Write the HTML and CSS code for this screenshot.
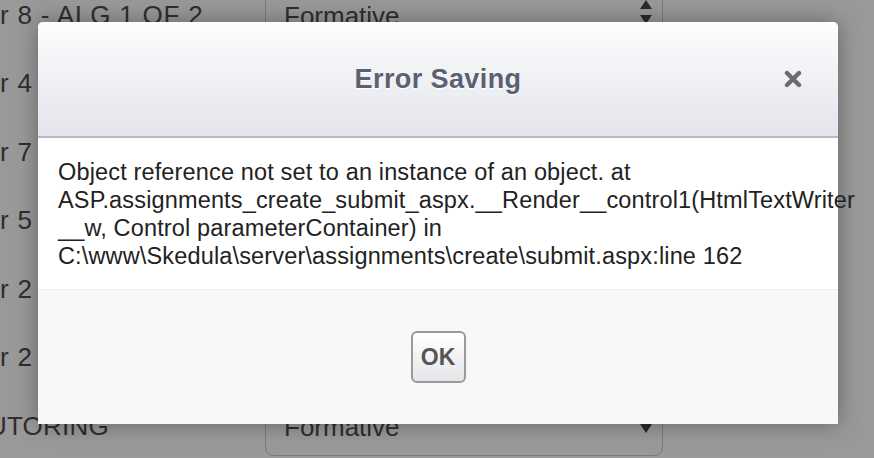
FILE: index.html
```html
<!DOCTYPE html>
<html lang="en">

<head>
  <meta charset="UTF-8">
  <meta name="viewport" content="width=device-width, initial-scale=1.0">
  <title>Error Saving</title>
  <link rel="stylesheet" href="styles.css">
</head>

<body>
  <!-- Page behind the modal -->
  <div class="page">
    <div class="row">
      <div class="row-label">r 8 - ALG 1 OF 2</div>
      <div class="select select-spin">Formative</div>
    </div>
    <div class="row">
      <div class="row-label">r 4</div>
      <div class="select">Formative</div>
    </div>
    <div class="row">
      <div class="row-label">r 7</div>
      <div class="select">Formative</div>
    </div>
    <div class="row">
      <div class="row-label">r 5</div>
      <div class="select">Formative</div>
    </div>
    <div class="row">
      <div class="row-label">r 2</div>
      <div class="select">Formative</div>
    </div>
    <div class="row">
      <div class="row-label">r 2</div>
      <div class="select">Formative</div>
    </div>
    <div class="row">
      <div class="row-label cut">UTORING</div>
      <div class="select">Formative</div>
    </div>
  </div>

  <!-- Modal -->
  <div class="modal">
    <div class="modal-header">
      <h2 class="modal-title">Error Saving</h2>
      <span class="modal-close">
        <svg width="18" height="18" viewBox="0 0 18 18">
          <path d="M3 3 L15 15 M15 3 L3 15" stroke="#6b6b6b" stroke-width="4.4" stroke-linecap="round" />
        </svg>
      </span>
    </div>
    <div class="modal-body">
      Object reference not set to an instance of an object. at
      ASP.assignments_create_submit_aspx.__Render__control1(HtmlTextWriter
      __w, Control parameterContainer) in
      C:\www\Skedula\server\assignments\create\submit.aspx:line 162
    </div>
    <div class="modal-footer">
      <button class="btn-ok">OK</button>
    </div>
  </div>
</body>

</html>
```

FILE: styles.css
```css
body {
  margin: 0;
  height: 458px;
  overflow: hidden;
  background: #999999;
  font-family: 'Liberation Sans', Arial, sans-serif;
  position: relative;
}

/* Dimmed page underneath */
.page {
  display: flex;
  flex-direction: column;
  margin-top: -19px;
}

.row {
  height: 68.5px;
  display: flex;
  align-items: center;
}

.row-label {
  width: 265px;
  font-size: 26px;
  letter-spacing: 0.8px;
  color: #2e2e2e;
  white-space: nowrap;
}

.row-label.cut {
  margin-left: -12px;
  width: 277px;
  letter-spacing: 0.2px;
}

.select {
  width: 398px;
  height: 58px;
  box-sizing: border-box;
  border: 1px solid #7a7a7a;
  border-radius: 8px;
  padding-left: 18px;
  font-size: 26px;
  color: #2e2e2e;
  display: flex;
  align-items: center;
  position: relative;
  margin-top: 2px;
}

.select::after {
  content: '';
  position: absolute;
  right: 10px;
  top: 25px;
  border-left: 6px solid transparent;
  border-right: 6px solid transparent;
  border-top: 9px solid #2b2b2b;
}

.select-spin::before {
  content: '';
  position: absolute;
  right: 10px;
  top: 12px;
  border-left: 6px solid transparent;
  border-right: 6px solid transparent;
  border-bottom: 9px solid #2b2b2b;
}

.select-spin::after {
  top: 27px;
}

/* Modal */
.modal {
  position: absolute;
  left: 38px;
  top: 22px;
  width: 800px;
  height: 402px;
  border-radius: 5px 5px 0 0;
  background: #f8f8f8;
  box-shadow: 0 0 22px rgba(0, 0, 0, 0.35);
  display: flex;
  flex-direction: column;
}

.modal-header {
  height: 114px;
  border-radius: 5px 5px 0 0;
  background: linear-gradient(to bottom, #fdfdfd, #e3e5ec);
  border-bottom: 2px solid #b9b9c6;
  display: flex;
  align-items: center;
  justify-content: center;
  position: relative;
}

.modal-title {
  margin: 0;
  font-size: 27px;
  font-weight: bold;
  color: #5b6170;
  text-shadow: 0 1px 0 #ffffff;
  letter-spacing: 0.4px;
}

.modal-close {
  position: absolute;
  right: 36px;
  top: 48px;
  width: 18px;
  height: 18px;
  display: flex;
}

.modal-body {
  background: #ffffff;
  height: 152px;
  box-sizing: border-box;
  padding: 20px 20px 0 20px;
  font-size: 23.5px;
  letter-spacing: 0.15px;
  line-height: 28px;
  color: #222222;
  border-bottom: 1px solid #ececec;
}

.modal-footer {
  flex: 1;
  display: flex;
  justify-content: center;
  padding-top: 41px;
  align-items: flex-start;
}

.btn-ok {
  width: 55px;
  height: 52px;
  border: 2px solid #9a9a9a;
  border-radius: 6px;
  background: linear-gradient(to bottom, #ffffff, #e6e6ea);
  font-family: 'Liberation Sans', Arial, sans-serif;
  font-size: 23px;
  font-weight: bold;
  color: #555555;
  padding: 0;
}
```
